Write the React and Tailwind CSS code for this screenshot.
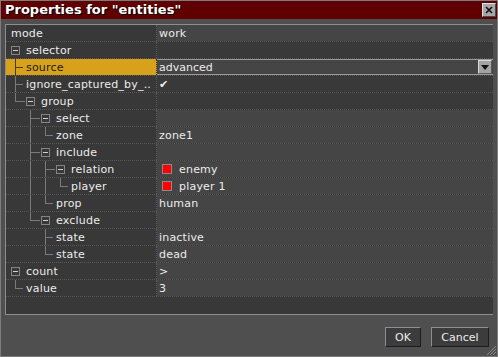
import React from "react";

const font = { fontFamily: '"DejaVu Sans", Verdana, sans-serif' };

// tree rows: depth, has expander, guide columns for ancestors ("line" | "none"), connector "tee" | "end"
const rows = [
  { label: "mode", value: "work", depth: 0 },
  { label: "selector", depth: 0, exp: true, dark: true },
  { label: "source", value: "advanced", depth: 1, guides: [], conn: "tee", selected: true },
  { label: "ignore_captured_by_..", value: "✔", depth: 1, guides: [], conn: "tee", dark: true },
  { label: "group", depth: 1, exp: true, guides: [], conn: "end", dark: true },
  { label: "select", depth: 2, exp: true, guides: ["none"], conn: "tee" },
  { label: "zone", value: "zone1", depth: 3, guides: ["none", "line"], conn: "end" },
  { label: "include", depth: 2, exp: true, guides: ["none"], conn: "tee" },
  { label: "relation", value: "enemy", swatch: true, depth: 3, exp: true, guides: ["none", "line"], conn: "tee" },
  { label: "player", value: "player 1", swatch: true, depth: 4, guides: ["none", "line", "line"], conn: "end" },
  { label: "prop", value: "human", depth: 3, guides: ["none", "line"], conn: "end" },
  { label: "exclude", depth: 2, exp: true, guides: ["none"], conn: "end" },
  { label: "state", value: "inactive", depth: 3, guides: ["none", "none"], conn: "tee" },
  { label: "state", value: "dead", depth: 3, guides: ["none", "none"], conn: "end" },
  { label: "count", value: ">", depth: 0, exp: true },
  { label: "value", value: "3", depth: 1, guides: [], conn: "end" },
];

const Expander = ({ color = "#d0d0d0" }) => (
  <svg width="9" height="9" className="shrink-0">
    <rect x="0.5" y="0.5" width="8" height="8" fill="none" stroke={color} strokeDasharray="1 1" />
    <line x1="2" y1="4.5" x2="7" y2="4.5" stroke={color} />
  </svg>
);

const Guide = ({ kind, exp, lineColor }) => (
  <div className="relative w-[15px] h-full shrink-0">
    {(kind === "line" || kind === "tee") && (
      <div className="absolute left-[4px] top-0 bottom-0 w-px" style={{ background: lineColor }} />
    )}
    {kind === "end" && (
      <div className="absolute left-[4px] top-0 h-[8px] w-px" style={{ background: lineColor }} />
    )}
    {(kind === "tee" || kind === "end") && (
      <div
        className={`absolute left-[4px] top-[8px] h-px ${exp ? "w-[10px]" : "w-[8px]"}`}
        style={{ background: lineColor }}
      />
    )}
  </div>
);

const Row = ({ row }) => {
  const lineColor = row.selected ? "#4a3a10" : "#7a7a7a";
  return (
    <div className="flex h-[17px] border-b border-dotted border-[#575757]">
      <div
        className={`flex items-center w-[151px] shrink-0 pl-[5px] border-r border-dotted ${
          row.selected ? "bg-[#d8a11c] text-[#1a1a1a] border-[#2a2a2a]" : "bg-[#383838] text-[#ececec] border-[#5a5a5a]"
        }`}
      >
        {(row.guides || []).map((g, i) => (
          <Guide key={i} kind={g} lineColor={lineColor} />
        ))}
        {row.conn && <Guide kind={row.conn} exp={row.exp} lineColor={lineColor} />}
        {row.exp && <Expander />}
        <span className={`whitespace-nowrap overflow-hidden leading-[14px] mt-[2px] tracking-[0.2px] ${row.exp ? "ml-[6px]" : ""}`}>
          {row.label}
        </span>
      </div>
      {row.selected ? (
        <div className="flex-1 flex items-center bg-[#454545] border-y border-[#9a9a9a] pl-[2px] text-[#ececec]">
          <span className="flex-1 leading-[14px] mt-[1px]">{row.value}</span>
          <div className="w-[14px] h-[14px] mr-px flex items-center justify-center bg-[#a3a3a3] border-t border-l border-[#d8d8d8] border-r border-b border-r-[#5a5a5a] border-b-[#5a5a5a]">
            <svg width="8" height="5">
              <polygon points="0,0 8,0 4,5" fill="#111" />
            </svg>
          </div>
        </div>
      ) : (
        <div
          className={`flex-1 flex items-center pl-[2px] text-[#ececec] ${
            row.dark ? "bg-[#393939]" : "bg-[#454545]"
          }`}
        >
          {row.swatch && (
            <span className="w-[10px] h-[10px] bg-[#ff0000] border border-[#8a8a8a] ml-[3px] mr-[7px]" />
          )}
          <span className="leading-[14px] mt-[2px] tracking-[0.2px]">{row.value}</span>
        </div>
      )}
    </div>
  );
};

export default function App() {
  return (
    <div
      className="w-[498px] h-[357px] bg-[#4f4f4f] border border-[#7c7c7c] flex flex-col text-[11px] leading-none"
      style={font}
    >
      <div className="h-[18px] bg-[#600000] flex items-center justify-between pl-[4px] pr-[1px]">
        <span className="text-white font-bold text-[13px] leading-[16px]" style={{ textShadow: "1px 1px 0 #000" }}>
          Properties for "entities"
        </span>
        <div className="w-[14px] h-[14px] bg-[#a8a8a8] border-t border-l border-[#e0e0e0] border-r border-b border-r-[#4a4a4a] border-b-[#4a4a4a] flex items-center justify-center">
          <svg width="8" height="8">
            <path d="M1 1 L7 7 M7 1 L1 7" stroke="#111" strokeWidth="1.6" />
          </svg>
        </div>
      </div>

      <div className="mt-[5px] ml-[4px] w-[488px] h-[291px] bg-[#383838] border-t border-l border-b border-[#8e8e8e]">
        {rows.map((r, i) => (
          <Row key={i} row={r} />
        ))}
      </div>

      <div className="flex-1 relative flex items-start justify-end gap-[10px] pt-[12px] pr-[8px]">
        <button className="w-[36px] h-[20px] bg-[#3c3c3c] text-[#ececec] border-t border-l border-[#8e8e8e] border-r border-b border-r-[#1c1c1c] border-b-[#1c1c1c]">
          OK
        </button>
        <button className="w-[58px] h-[20px] bg-[#3c3c3c] text-[#ececec] border-t border-l border-[#8e8e8e] border-r border-b border-r-[#1c1c1c] border-b-[#1c1c1c]">
          Cancel
        </button>
        <svg width="12" height="12" className="absolute right-0 bottom-0">
          <path d="M11 2 L2 11 M11 5 L5 11 M11 8 L8 11" stroke="#8a8a8a" strokeWidth="1" />
        </svg>
      </div>
    </div>
  );
}
